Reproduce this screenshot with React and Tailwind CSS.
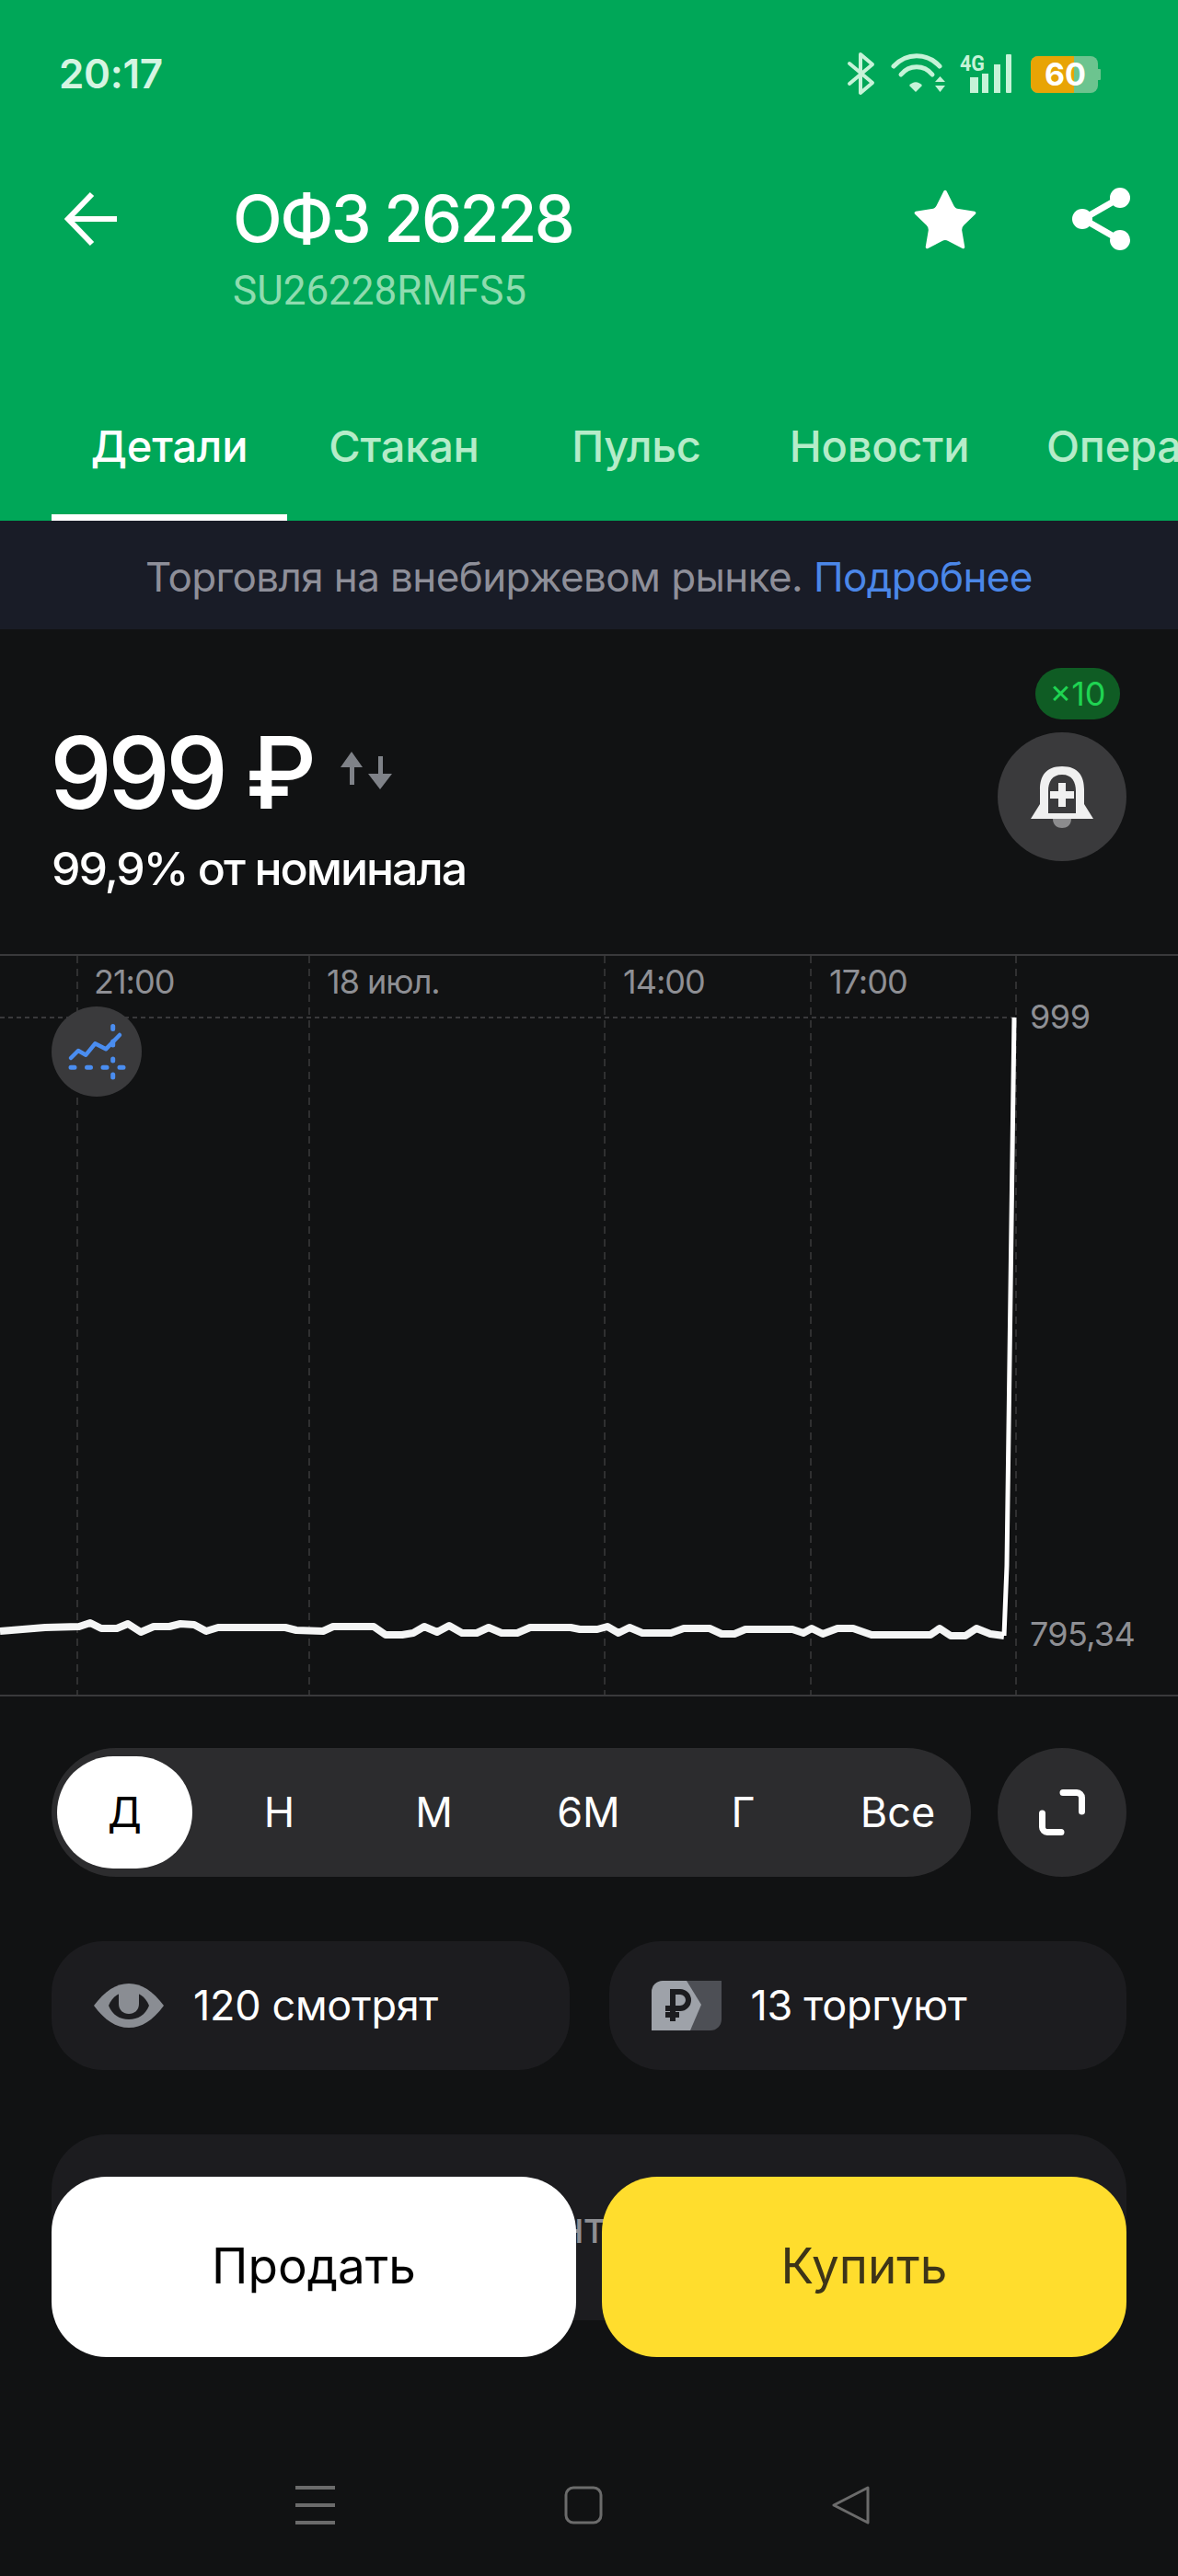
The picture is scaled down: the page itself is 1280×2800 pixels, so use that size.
import { Star } from 'lucide-react';

const FONT = "font-['Inter','Noto_Sans',sans-serif]";

// chart points read off the screenshot
const LINE = [
  [0, 1771], [49, 1767], [86, 1766], [98, 1762], [110, 1768], [127, 1768], [139, 1763], [153, 1772],
  [167, 1766], [184, 1766], [196, 1763], [211, 1764], [224, 1771], [237, 1767], [310, 1767], [322, 1770],
  [351, 1771], [362, 1766], [406, 1766], [419, 1775], [437, 1775], [449, 1773], [461, 1766], [475, 1772],
  [488, 1765], [502, 1773], [518, 1773], [531, 1767], [545, 1773], [562, 1773], [576, 1767], [620, 1767],
  [630, 1769], [649, 1769], [660, 1766], [672, 1773], [684, 1767], [698, 1773], [729, 1773], [743, 1768],
  [771, 1768], [784, 1774], [798, 1774], [810, 1769], [861, 1769], [873, 1773], [882, 1768], [894, 1774],
  [910, 1768], [927, 1768], [947, 1775], [1011, 1775], [1021, 1768], [1033, 1776], [1049, 1776], [1061, 1768],
  [1076, 1774], [1091, 1776],
];
const SPIKE = [[1091, 1776], [1094, 1700], [1102, 1104]];

const GRID_X = [84, 336, 657, 881, 1104];

const TIME_LABELS = [
  { text: '21:00', x: 102 },
  { text: '18 июл.', x: 355 },
  { text: '14:00', x: 677 },
  { text: '17:00', x: 901 },
];

const TABS = [
  { label: 'Детали', cls: 'ml-[56px] w-[256px] justify-center border-b-[7px] border-white text-white' },
  { label: 'Стакан', cls: 'ml-[45px] w-[164px] justify-center border-b-[7px] border-transparent text-[#b5ecc9]' },
  { label: 'Пульс', cls: 'ml-[102px] w-[137px] justify-center border-b-[7px] border-transparent text-[#b5ecc9]' },
  { label: 'Новости', cls: 'ml-[99px] w-[193px] justify-center border-b-[7px] border-transparent text-[#b5ecc9]' },
  { label: 'Операции', cls: 'ml-[85px] shrink-0 border-b-[7px] border-transparent text-[#b5ecc9]' },
];

const PERIODS = ['Д', 'Н', 'М', '6М', 'Г', 'Все'];

const toPoints = (list) => list.map(([x, y]) => `${x},${y - 1037}`).join(' ');

function StatusIcons() {
  return (
    <svg width="280" height="50" viewBox="0 0 280 50" className="shrink-0">
      {/* bluetooth */}
      <path d="M6 14 L31 35 L18 46 L18 4 L31 15 L6 36" fill="none" stroke="#c6f3d8" strokeWidth="4" strokeLinecap="round" strokeLinejoin="round" />
      {/* wifi */}
      <path d="M54 17 C68 2 90 2 104 17" fill="none" stroke="#c6f3d8" strokeWidth="5" strokeLinecap="round" />
      <path d="M62 26 C71 15 87 15 96 26" fill="none" stroke="#c6f3d8" strokeWidth="5" strokeLinecap="round" />
      <path d="M71 38 C75 33 81 33 85 38 L78 45 Z" fill="#c6f3d8" />
      <path d="M99 34 L104.500 28 L110 34 Z M99 38 L110 38 L104.500 45 Z" fill="#c6f3d8" />
      {/* signal */}
      <text x="126" y="22" fontFamily="Roboto, sans-serif" fontWeight="700" fontSize="24" fill="#c6f3d8" textLength="27" lengthAdjust="spacingAndGlyphs">4G</text>
      <rect x="137" y="29" width="9" height="17" fill="#c6f3d8" />
      <rect x="150" y="25" width="7" height="21" fill="#c6f3d8" />
      <rect x="163" y="15" width="7" height="31" fill="#c6f3d8" />
      <rect x="176" y="4" width="6" height="42" rx="1" fill="#c6f3d8" />
      {/* battery */}
      <rect x="203" y="6" width="73" height="40" rx="8" fill="#6cc48f" />
      <path d="M211 6 H250 V46 H211 A8 8 0 0 1 203 38 V14 A8 8 0 0 1 211 6 Z" fill="#e8a405" />
      <path d="M276 20 H278 A1 1 0 0 1 279 21 V31 A1 1 0 0 1 278 32 H276 Z" fill="#6cc48f" />
      <text x="218" y="38" fontFamily="Inter, sans-serif" fontWeight="700" fontSize="34" fill="#ffffff">60</text>
    </svg>
  );
}

function Chart() {
  return (
    <div className="relative h-[807px] border-y-2 border-[#39393b]">
      <svg width="1280" height="803" viewBox="0 0 1280 803" className="absolute left-0 top-0">
        {GRID_X.map((x) => (
          <line key={x} x1={x} y1="0" x2={x} y2="803" stroke="#3b3b3d" strokeWidth="1.5" strokeDasharray="8 6" />
        ))}
        <line x1="0" y1="67" x2="1104" y2="67" stroke="#47474a" strokeWidth="1.5" strokeDasharray="5 4" />
        <polyline points={toPoints(LINE)} fill="none" stroke="#f4f5f5" strokeWidth="8" strokeLinejoin="round" />
        <polyline points={toPoints(SPIKE)} fill="none" stroke="#ffffff" strokeWidth="5" strokeLinejoin="round" />
      </svg>

      {TIME_LABELS.map((l) => (
        <span key={l.text} className="absolute top-[6px] text-[36px] leading-[44px] tracking-[-1px] text-[#8e8f94]" style={{ left: l.x }}>
          {l.text}
        </span>
      ))}
      <span className="absolute left-[1119px] top-[44px] text-[36px] leading-[44px] tracking-[-0.5px] text-[#8e8f94]">999</span>
      <span className="absolute left-[1119px] top-[715px] text-[36px] leading-[44px] tracking-[-0.7px] text-[#8e8f94]">795,34</span>

      <div className="absolute left-[56px] top-[55px] flex h-[98px] w-[98px] items-center justify-center rounded-full bg-[#3a3a3c]">
        <svg width="72" height="72" viewBox="0 0 72 72">
          <path d="M8 43 L16 35 L24.300 39.700 L34.300 27.300 L46 33.300 L61 18" fill="none" stroke="#4a8df0" strokeWidth="4.500" strokeLinecap="round" strokeLinejoin="round" />
          <path d="M8 53.300 H12 M25.500 53.300 H29.500 M43 53.300 H47 M61 53.300 H65" stroke="#4a8df0" strokeWidth="5" strokeLinecap="round" />
          <path d="M53.700 8.500 V11.500 M53.700 25 V29 M53.700 44 V46 M53.700 61 V64" stroke="#4a8df0" strokeWidth="5" strokeLinecap="round" />
        </svg>
      </div>
    </div>
  );
}

export default function App() {
  return (
    <div className={`flex h-[2800px] w-[1280px] flex-col overflow-hidden bg-[#111213] ${FONT}`}>
      <header className="h-[566px] shrink-0 bg-[#00a758]">
        <div className="flex h-[160px] items-center justify-between pl-[64px] pr-[83px]">
          <span className="text-[44px] font-semibold leading-none tracking-[-0.3px] text-[#d5f5e2]">20:17</span>
          <StatusIcons />
        </div>

        <div className="flex h-[164px] items-start">
          <div className="flex h-[156px] w-[253px] shrink-0 items-start pl-[70px] pt-[48px]">
            <svg width="60" height="60" viewBox="0 0 60 60">
              <path d="M57 30 H5 M30 3 L4 30 L30 57" fill="none" stroke="#ffffff" strokeWidth="6" />
            </svg>
          </div>
          <div className="flex-1">
            <div className="mt-[36px] text-[70px] font-medium leading-[84px] tracking-[-2.500px] text-white">ОФЗ 26228</div>
            <div className="mt-[11px] font-['Roboto',sans-serif] text-[44px] leading-[50px] text-[#8fdcaf]">SU26228RMFS5</div>
          </div>
          <Star className="mt-[40px] shrink-0" size={80} fill="#ffffff" stroke="#ffffff" strokeWidth={0} />
          <svg width="68" height="72" viewBox="0 0 68 72" className="ml-[96px] mr-[49px] mt-[42px] shrink-0">
            <path d="M54 13 L14 36 L54 59" fill="none" stroke="#ffffff" strokeWidth="7" />
            <circle cx="54" cy="13" r="11" fill="#ffffff" />
            <circle cx="13" cy="36" r="11" fill="#ffffff" />
            <circle cx="54" cy="59" r="11" fill="#ffffff" />
          </svg>
        </div>

        <nav className="flex h-[242px] items-end overflow-hidden">
          {TABS.map((t) => (
            <div key={t.label} className={`flex h-[116px] shrink-0 items-center whitespace-nowrap pb-[38px] text-[47px] font-medium tracking-[-0.2px] ${t.cls}`}>
              {t.label}
            </div>
          ))}
        </nav>
      </header>

      <div className="flex h-[118px] shrink-0 items-center justify-center bg-[#191c27] pt-[4px] text-[44px] tracking-[-0.6px] text-[#8e8f99]">
        <span>Торговля на внебиржевом рынке.&nbsp;</span>
        <span className="text-[#4b87e8]">Подробнее</span>
      </div>

      <section className="flex h-[353px] shrink-0 justify-between pl-[54px] pr-[56px]">
        <div className="pt-[91px]">
          <div className="flex items-start">
            <span className="text-[108px] font-medium leading-[130px] tracking-[-5px] text-white">999 ₽</span>
            <svg width="56" height="42" viewBox="0 0 56 42" className="ml-[31px] mt-[42px]">
              <path d="M12 0 L24 17 H15 V36 H10 V17 H0 Z M43 41 L30 24 H41 V5 H46 V24 H56 Z" fill="#7f8288" />
            </svg>
          </div>
          <div className="ml-[2px] mt-[8px] text-[50px] font-medium leading-[62px] tracking-[-2px] text-white">99,9% от номинала</div>
        </div>
        <div className="relative mt-[112px] h-[140px] w-[140px]">
          <div className="absolute -top-[70px] left-[41px] flex h-[56px] w-[92px] items-center justify-center rounded-full bg-[#0f5c24] text-[36px] leading-none text-[#1fd452]">
            ×10
          </div>
          <div className="flex h-[140px] w-[140px] items-center justify-center rounded-full bg-[#3a3a3c]">
            <svg width="72" height="72" viewBox="0 0 72 72">
              <path d="M36 3 C18 3 12 14 12 28 V44 L2 60 H70 L60 44 V28 C60 14 54 3 36 3 Z M36 12 C25 12 21 20 21 30 V54 H51 V30 C51 20 47 12 36 12 Z" fill="#f0f0f0" fillRule="evenodd" />
              <path d="M32 21 H40 V30 H49 V38 H40 V47 H32 V38 H23 V30 H32 Z" fill="#f0f0f0" />
              <path d="M26 60 H46 C46 67 41 70 36 70 C31 70 26 67 26 60 Z" fill="#8c8c8e" />
            </svg>
          </div>
        </div>
      </section>

      <Chart />

      <section className="flex shrink-0 justify-between px-[56px] pt-[56px]">
        <div className="flex h-[140px] w-[999px] items-center justify-between rounded-full bg-[#2c2c2e] px-[6px]">
          {PERIODS.map((p, i) => (
            <div
              key={p}
              className={`flex h-[122px] w-[147px] items-center justify-center rounded-full text-[45px] ${i === 0 ? 'bg-white text-black' : 'text-white'}`}
            >
              {p}
            </div>
          ))}
        </div>
        <div className="flex h-[140px] w-[140px] items-center justify-center rounded-full bg-[#2c2c2e]">
          <svg width="50" height="50" viewBox="0 0 50 50">
            <path d="M26 3.500 H41 A5.500 5.500 0 0 1 46.500 9 V24 M3.500 26 V41 A5.500 5.500 0 0 0 9 46.500 H24" fill="none" stroke="#ffffff" strokeWidth="7" strokeLinecap="round" />
          </svg>
        </div>
      </section>

      <section className="flex shrink-0 gap-[43px] px-[56px] pt-[70px]">
        <div className="flex h-[140px] flex-1 items-center gap-[32px] rounded-[56px] bg-[#1c1c1f] pl-[46px] text-[45px] tracking-[-0.3px] text-white">
          <svg width="76" height="48" viewBox="0 0 76 48">
            <path d="M0 24 C12 8 24 0 38 0 C52 0 64 8 76 24 C64 40 52 48 38 48 C24 48 12 40 0 24 Z" fill="#8a8d93" />
            <path d="M16 24 C20 14 28 9 38 9 C48 9 56 14 60 24 C56 34 48 39 38 39 C28 39 20 34 16 24 Z" fill="#1c1c1f" />
            <path d="M27 8 H49 V22 C49 29 44 33 38 33 C32 33 27 29 27 22 Z" fill="#8a8d93" />
          </svg>
          120 смотрят
        </div>
        <div className="flex h-[140px] flex-1 items-center gap-[32px] rounded-[56px] bg-[#1c1c1f] pl-[46px] text-[45px] tracking-[-0.3px] text-white">
          <svg width="76" height="54" viewBox="0 0 76 54">
            <path d="M30 0 H76 V42 A12 12 0 0 1 64 54 H30 Z" fill="#4d4f55" />
            <path d="M12 0 H38 L54 26 L42 54 H0 V12 A12 12 0 0 1 12 0 Z" fill="#9ea2a9" />
            <path d="M23 44 V12 H31 A9 9 0 0 1 31 30 H15 M15 37 H30" fill="none" stroke="#1c1c1f" strokeWidth="6" />
          </svg>
          13 торгуют
        </div>
      </section>

      <section className="relative mx-[56px] mt-[70px] flex h-[202px] shrink-0 items-center justify-center rounded-[60px] bg-[#1c1c1f] text-[48px] text-[#8e8f93]">
        <span className="mr-[16px]">нт</span>
        <div className="absolute inset-x-0 top-[46px] flex justify-between">
          <div className="flex h-[196px] w-[570px] items-center justify-center rounded-[60px] bg-white text-[53px] text-black">Продать</div>
          <div className="flex h-[196px] w-[570px] items-center justify-center rounded-[60px] bg-[#ffdd2d] text-[53px] text-[#3d3418]">Купить</div>
        </div>
      </section>

      <nav className="mt-[180px] flex items-start">
        <svg width="44" height="42" viewBox="0 0 44 42" className="ml-[321px]">
          <path d="M0 2 H43 M0 21 H43 M0 40 H43" stroke="#6b6b6b" strokeWidth="4" />
        </svg>
        <svg width="44" height="42" viewBox="0 0 44 42" className="ml-[248px]">
          <rect x="2" y="2" width="38" height="38" rx="8" fill="none" stroke="#6b6b6b" strokeWidth="3" />
        </svg>
        <svg width="44" height="42" viewBox="0 0 44 42" className="ml-[246px]">
          <path d="M40 2 L3 21 L40 40 Z" fill="none" stroke="#6b6b6b" strokeWidth="3" strokeLinejoin="round" />
        </svg>
      </nav>
    </div>
  );
}
